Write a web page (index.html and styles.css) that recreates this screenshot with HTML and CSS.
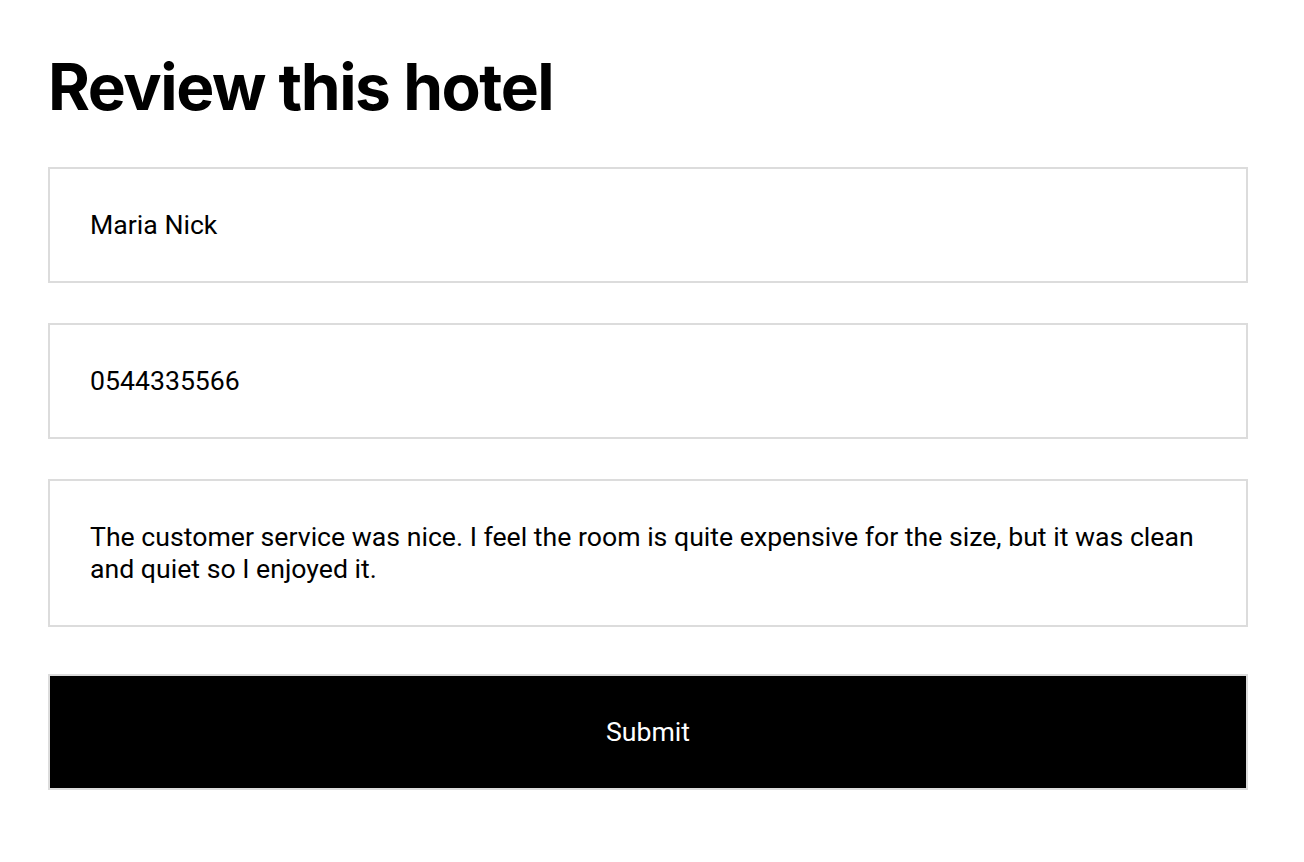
FILE: index.html
```html
<!DOCTYPE html>
<html lang="en">
<head>
<meta charset="utf-8">
<title>Review this hotel</title>
<link rel="stylesheet" href="styles.css">
</head>
<body>
<main class="page">
  <h1 class="title">Review this hotel</h1>
  <form class="review-form">
    <input class="field" type="text" value="Maria Nick">
    <input class="field" type="text" value="0544335566">
    <textarea class="field field-area">The customer service was nice. I feel the room is quite expensive for the size, but it was clean and quiet so I enjoyed it.</textarea>
    <button class="submit" type="button">Submit</button>
  </form>
</main>
</body>
</html>
```

FILE: styles.css
```css
* { box-sizing: border-box; }

html, body {
  margin: 0;
  background: #fff;
  color: #000;
}

.page {
  padding: 48px;
}

.title {
  margin: 0 0 42px;
  font-family: Inter, "Liberation Sans", sans-serif;
  font-weight: 700;
  font-size: 64px;
  line-height: 77px;
  letter-spacing: -1.45px;
}

.review-form {
  width: 1200px;
  display: flex;
  flex-direction: column;
  gap: 40px;
}

.field {
  display: block;
  width: 100%;
  margin: 0;
  padding: 40px;
  border: 2px solid #dcdcdc;
  border-radius: 0;
  background: #fff;
  color: #000;
  font-family: Roboto, "Liberation Sans", sans-serif;
  font-size: 26.66px;
  line-height: 32px;
  height: 116px;
  outline: none;
}

.field-area {
  height: 148px;
  resize: none;
  overflow: hidden;
}

.submit {
  display: block;
  width: 100%;
  height: 116px;
  margin: 7px 0 0;
  padding: 0;
  border: 2px solid #dcdcdc;
  border-radius: 0;
  background: #000;
  color: #fff;
  font-family: Roboto, "Liberation Sans", sans-serif;
  font-size: 26.66px;
  line-height: 32px;
  cursor: pointer;
}
```
